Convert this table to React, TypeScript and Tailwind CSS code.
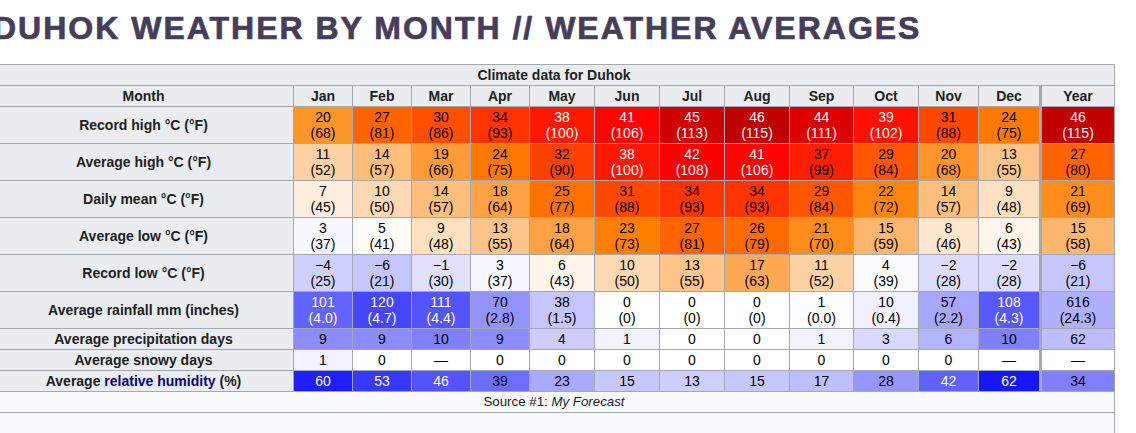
import React from "react";

const clamp = (v: number) => Math.round(Math.max(0, Math.min(255, v)));

const tempBg = (c: number) => {
  const r = c < 4.5 ? clamp((255 * (c + 42.75)) / 47.25) : clamp((255 * (60 - c)) / 18.5);
  const g = c <= 4.5 ? clamp((255 * (c + 42.75)) / 47.25) : clamp((255 * (41.5 - c)) / 37);
  const b = clamp((255 * (23 - c)) / 18.5);
  return `rgb(${r},${g},${b})`;
};
const blue = (x: number) => {
  const v = clamp(x);
  return `rgb(${v},${v},255)`;
};
const rainBg = (mm: number) => blue((255 * (165.1 - mm)) / 165.1);
const daysBg = (d: number) => blue((255 * (20 - d)) / 20);
const humBg = (h: number) => blue((255 * (68 - h)) / 68);

const fmt = (n: number) => (n < 0 ? `\u2212${Math.abs(n)}` : `${n}`);

const months = ["Jan", "Feb", "Mar", "Apr", "May", "Jun", "Jul", "Aug", "Sep", "Oct", "Nov", "Dec", "Year"];

type Pair = [number, number];
const recordHigh: Pair[] = [[20, 68], [27, 81], [30, 86], [34, 93], [38, 100], [41, 106], [45, 113], [46, 115], [44, 111], [39, 102], [31, 88], [24, 75], [46, 115]];
const avgHigh: Pair[] = [[11, 52], [14, 57], [19, 66], [24, 75], [32, 90], [38, 100], [42, 108], [41, 106], [37, 99], [29, 84], [20, 68], [13, 55], [27, 80]];
const dailyMean: Pair[] = [[7, 45], [10, 50], [14, 57], [18, 64], [25, 77], [31, 88], [34, 93], [34, 93], [29, 84], [22, 72], [14, 57], [9, 48], [21, 69]];
const avgLow: Pair[] = [[3, 37], [5, 41], [9, 48], [13, 55], [18, 64], [23, 73], [27, 81], [26, 79], [21, 70], [15, 59], [8, 46], [6, 43], [15, 58]];
const recordLow: Pair[] = [[-4, 25], [-6, 21], [-1, 30], [3, 37], [6, 43], [10, 50], [13, 55], [17, 63], [11, 52], [4, 39], [-2, 28], [-2, 28], [-6, 21]];
const rain: [number, string][] = [[101, "4.0"], [120, "4.7"], [111, "4.4"], [70, "2.8"], [38, "1.5"], [0, "0"], [0, "0"], [0, "0"], [1, "0.0"], [10, "0.4"], [57, "2.2"], [108, "4.3"], [616, "24.3"]];
const precipDays = [9, 9, 10, 9, 4, 1, 0, 0, 1, 3, 6, 10, 62];
const snowDays: (number | null)[] = [1, 0, null, 0, 0, 0, 0, 0, 0, 0, 0, null, null];
const humidity = [60, 53, 46, 39, 23, 15, 13, 15, 17, 28, 42, 62, 34];

const cellBase = "border-r border-b border-[#a2a9b1] text-center text-[14px] leading-4 py-[2px] px-1 whitespace-nowrap";

function Label({ children }: { children: React.ReactNode }) {
  return (
    <div className="flex items-center justify-center border-r border-b border-[#a2a9b1] bg-[#eaecf0] px-1 text-center text-[14px] font-bold leading-4 text-[#202122]">
      <span>{children}</span>
    </div>
  );
}

function Cell({ i, bg, color, lines }: { i: number; bg: string; color: string; lines: string[] }) {
  return (
    <div className={`${cellBase} ${i === 12 ? "border-l-2" : ""}`} style={{ background: bg, color }}>
      {lines.map((l, k) => (
        <div key={k}>{l}</div>
      ))}
    </div>
  );
}

function TempRow({ label, data }: { label: string; data: Pair[] }) {
  return (
    <>
      <Label>{label}</Label>
      {data.map(([c, f], i) => (
        <Cell key={i} i={i} bg={tempBg(c)} color={c >= 37.8 ? "#fff" : "#000"} lines={[fmt(c), `(${fmt(f)})`]} />
      ))}
    </>
  );
}

export default function App() {
  return (
    <div className="h-[433px] w-[1136px] overflow-hidden bg-white font-['Liberation_Sans',Arial,sans-serif]">
      <div className="ml-[-7px]">
        <h1 className="whitespace-nowrap pt-2 text-[32px] font-bold leading-[40px] tracking-[2px] text-[#463d5a] [-webkit-text-stroke:0.7px_#463d5a]">
          DUHOK WEATHER BY MONTH // WEATHER AVERAGES
        </h1>
        <div className="mt-4 grid w-max grid-cols-[300px_59px_59px_59px_59px_65px_65px_65px_65px_64px_65px_60px_61px_75px] border-l border-t border-[#a2a9b1] bg-[#f8f9fa] text-[#202122]">
          <div className="col-span-14 h-[21px] border-r border-b border-[#a2a9b1] bg-[#eaecf0] text-center text-[14px] font-bold leading-5">
            Climate data for Duhok
          </div>

          <div className="h-[21px] border-r border-b border-[#a2a9b1] bg-[#eaecf0] text-center text-[14px] font-bold leading-5">Month</div>
          {months.map((m, i) => (
            <div
              key={m}
              className={`h-[21px] border-r border-b border-[#a2a9b1] bg-[#eaecf0] text-center text-[14px] font-bold leading-5 ${i === 12 ? "border-l-2" : ""}`}
            >
              {m}
            </div>
          ))}

          <TempRow label="Record high °C (°F)" data={recordHigh} />
          <TempRow label="Average high °C (°F)" data={avgHigh} />
          <TempRow label="Daily mean °C (°F)" data={dailyMean} />
          <TempRow label="Average low °C (°F)" data={avgLow} />
          <TempRow label="Record low °C (°F)" data={recordLow} />

          <Label>Average rainfall mm (inches)</Label>
          {rain.map(([mm, inch], i) => {
            const m = i === 12 ? mm / 12 : mm;
            return <Cell key={i} i={i} bg={rainBg(m)} color={m > 90 ? "#fff" : "#000"} lines={[`${mm}`, `(${inch})`]} />;
          })}

          <Label>Average precipitation days</Label>
          {precipDays.map((d, i) => (
            <Cell key={i} i={i} bg={daysBg(i === 12 ? d / 12 : d)} color="#000" lines={[`${d}`]} />
          ))}

          <Label>Average snowy days</Label>
          {snowDays.map((d, i) => (
            <Cell key={i} i={i} bg={d === null ? "#fff" : daysBg(d)} color="#000" lines={[d === null ? "\u2014" : `${d}`]} />
          ))}

          <Label>
            Average <span className="text-[#0b0080]">relative humidity</span> (%)
          </Label>
          {humidity.map((h, i) => (
            <Cell key={i} i={i} bg={humBg(h)} color={h >= 40 ? "#fff" : "#000"} lines={[`${h}`]} />
          ))}

          <div className="col-span-14 h-[21px] border-r border-b border-[#a2a9b1] text-center text-[13.3px] leading-5 text-[#202122]">
            Source #1: <i>My Forecast</i>
          </div>
          <div className="col-span-14 h-[30px] border-r border-[#a2a9b1]"></div>
        </div>
      </div>
    </div>
  );
}
